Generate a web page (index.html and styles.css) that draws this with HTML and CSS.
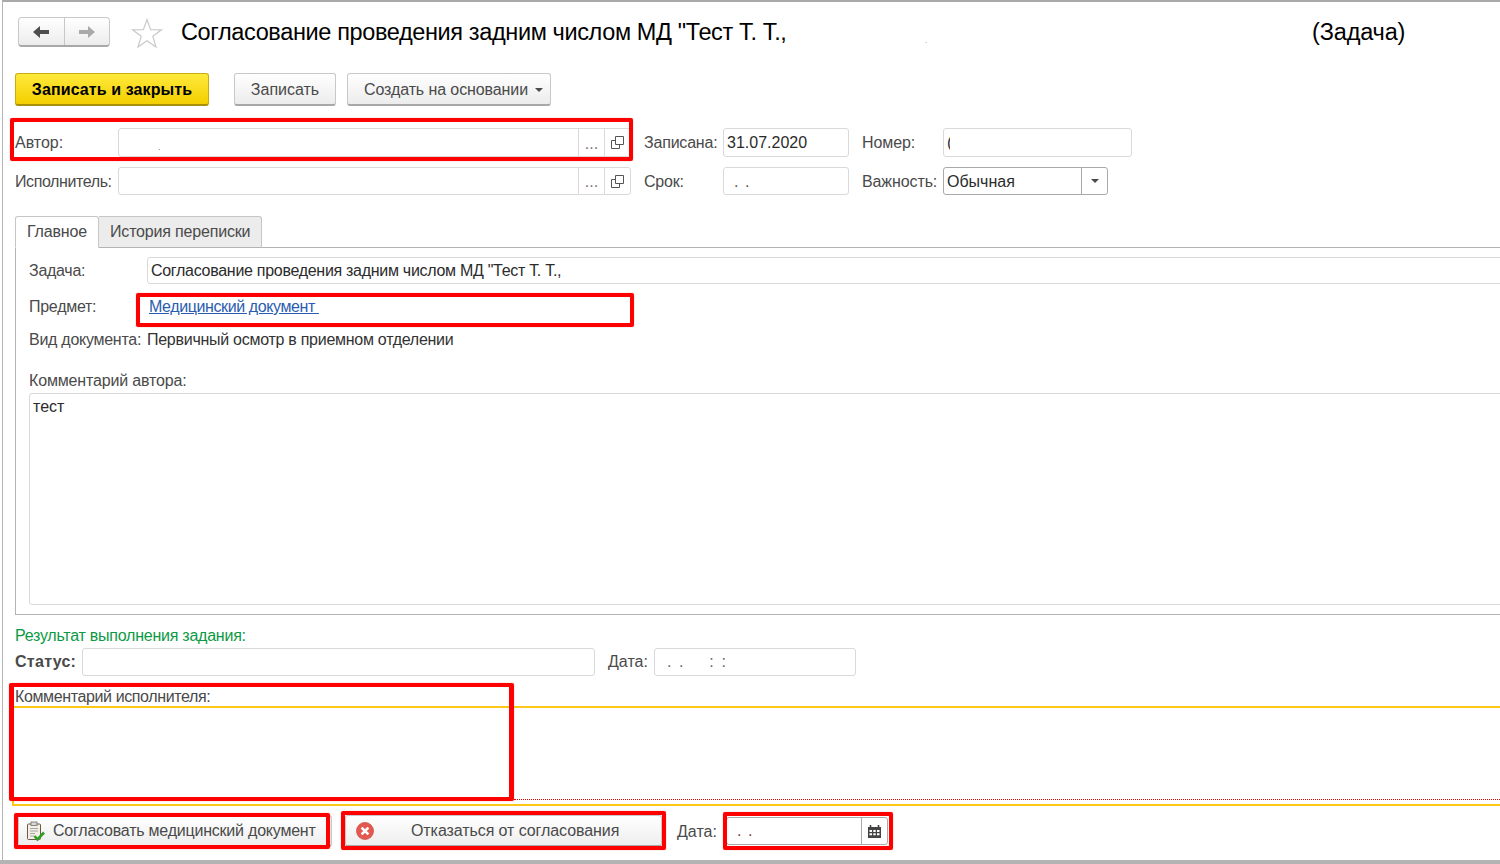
FILE: index.html
```html
<!DOCTYPE html>
<html lang="en">
<head>
    <meta charset="UTF-8">
    <title>Согласование проведения задним числом МД (Задача)</title>
    <link rel="stylesheet" href="styles.css">
</head>
<body>
<div class="page">
    <!-- Title bar -->
    <div class="title-row">
        <div class="nav-buttons">
            <button class="nav-btn">
                <svg width="18" height="14" viewBox="0 0 18 14"><path d="M8 1 L1 7 L8 13 V9 H17 V5 H8 Z" fill="#4d4d4d"/></svg>
            </button>
            <button class="nav-btn">
                <svg width="18" height="14" viewBox="0 0 18 14"><path d="M10 1 L17 7 L10 13 V9 H1 V5 H10 Z" fill="#a9a9a9"/></svg>
            </button>
        </div>
        <svg class="star" width="32" height="30" viewBox="0 0 32 30"><path d="M16 1.5 L19.6 11.6 L30.5 11.8 L21.8 18.3 L25 29 L16 22.7 L7 29 L10.2 18.3 L1.5 11.8 L12.4 11.6 Z" fill="#fff" stroke="#c9c9c9" stroke-width="1.2"/></svg>
        <div class="title">Согласование проведения задним числом МД "Тест Т. Т.,</div>
        <div class="title-dot">.</div>
        <div class="title-kind">(Задача)</div>
    </div>

    <!-- Command bar -->
    <div class="command-row">
        <button class="btn btn-primary">Записать и закрыть</button>
        <button class="btn btn-save">Записать</button>
        <button class="btn btn-create">Создать на основании<span class="caret"></span></button>
    </div>

    <!-- Header fields -->
    <div class="field-row row-author">
        <span class="label label-left label-author">Автор:</span>
        <div class="input input-ref">
            <span class="input-text author-dot">.</span>
            <span class="input-btn dots">...</span>
            <span class="input-btn">
                <svg class="copy-icon" width="13" height="13" viewBox="0 0 13 13"><path d="M4.5 .5 H12.5 V8.5 H4.5 Z M4.5 4.5 H.5 V12.5 H8.5 V8.5" fill="none" stroke="#555"/></svg>
            </span>
        </div>
        <span class="label label-mid">Записана:</span>
        <div class="input input-date"><span class="input-text dark">31.07.2020</span></div>
        <span class="label label-right">Номер:</span>
        <div class="input input-number"><span class="input-text dark number-clip">(</span></div>
    </div>
    <div class="field-row row-performer">
        <span class="label label-left">Исполнитель:</span>
        <div class="input input-ref">
            <span class="input-text"></span>
            <span class="input-btn dots">...</span>
            <span class="input-btn">
                <svg class="copy-icon" width="13" height="13" viewBox="0 0 13 13"><path d="M4.5 .5 H12.5 V8.5 H4.5 Z M4.5 4.5 H.5 V12.5 H8.5 V8.5" fill="none" stroke="#555"/></svg>
            </span>
        </div>
        <span class="label label-mid">Срок:</span>
        <div class="input input-date"><span class="input-text date-mask">. .</span></div>
        <span class="label label-right">Важность:</span>
        <div class="input input-select">
            <span class="input-text dark">Обычная</span>
            <span class="input-btn"><span class="caret"></span></span>
        </div>
    </div>

    <!-- Tabs -->
    <div class="tabs">
        <div class="tab tab-active">Главное</div>
        <div class="tab">История переписки</div>
    </div>
    <div class="tab-panel">
        <div class="panel-row row-task">
            <span class="label panel-label">Задача:</span>
            <div class="input input-task"><span class="input-text dark">Согласование проведения задним числом МД "Тест Т. Т.,</span></div>
        </div>
        <div class="panel-row row-subject">
            <span class="label panel-label">Предмет:</span>
            <a class="doc-link" href="#">Медицинский документ </a>
        </div>
        <div class="panel-row row-kind">
            <span class="label panel-label">Вид документа:</span>
            <span class="plain-value">Первичный осмотр в приемном отделении</span>
        </div>
        <div class="label author-comment-label">Комментарий автора:</div>
        <div class="comment-box">тест</div>
    </div>

    <!-- Result -->
    <div class="result-title">Результат выполнения задания:</div>
    <div class="field-row row-status">
        <span class="label label-status">Статус:</span>
        <div class="input input-status"></div>
        <span class="label label-status-date">Дата:</span>
        <div class="input input-status-date"><span class="input-text date-mask-gray">. .&nbsp;&nbsp;&nbsp;&nbsp;: :</span></div>
    </div>
    <div class="label performer-comment-label">Комментарий исполнителя:</div>
    <div class="performer-comment"><div class="dotted-line"></div></div>

    <!-- Bottom actions -->
    <div class="action-row">
        <button class="btn btn-action btn-approve">
            <svg width="20" height="20" viewBox="0 0 20 20">
                <rect x="2.5" y="3" width="13" height="15.5" rx="1" fill="#f4efe4" stroke="#6b5a45"/>
                <rect x="6" y="1" width="6" height="3.5" fill="#d8d8d8" stroke="#6b6b6b" stroke-width=".8"/>
                <path d="M5 7.5 H13 M5 10 H13 M5 12.5 H10 M5 15 H9" stroke="#a7a7a7"/>
                <path d="M9.5 15 L12.5 18.5 L19 11.5" fill="none" stroke="#2f9e22" stroke-width="2.6"/>
            </svg>
            <span>Согласовать медицинский документ</span>
        </button>
        <button class="btn btn-action btn-refuse">
            <svg width="18" height="18" viewBox="0 0 18 18">
                <circle cx="9" cy="9" r="8.5" fill="#e5574f" stroke="#c9544c" stroke-width=".8"/>
                <path d="M5.6 5.6 L12.4 12.4 M12.4 5.6 L5.6 12.4" stroke="#fff" stroke-width="2.6"/>
            </svg>
            <span>Отказаться от согласования</span>
        </button>
        <span class="label label-action-date">Дата:</span>
        <div class="input input-action-date">
            <span class="input-text date-mask action-mask">. .</span>
            <span class="input-btn">
                <svg width="13" height="13" viewBox="0 0 13 13">
                    <path d="M0 2 H13 V13 H0 Z" fill="#444"/>
                    <path d="M2.5 0 V3 M10.5 0 V3" stroke="#444" stroke-width="1.6"/>
                    <path d="M1.5 5 H4 V7 H1.5 Z M5.3 5 H7.7 V7 H5.3 Z M9 5 H11.5 V7 H9 Z M1.5 8.2 H4 V10.2 H1.5 Z M5.3 8.2 H7.7 V10.2 H5.3 Z M9 8.2 H11.5 V10.2 H9 Z" fill="#fff"/>
                </svg>
            </span>
        </div>
    </div>

    <!-- Red annotation frames drawn over the screenshot -->
    <div class="mark mark-author"></div>
    <div class="mark mark-subject"></div>
    <div class="mark mark-comment"></div>
    <div class="mark mark-approve"></div>
    <div class="mark mark-refuse"></div>
    <div class="mark mark-date"></div>
</div>
<div class="bottom-bar"></div>
</body>
</html>
```

FILE: styles.css
```css
* {
    box-sizing: border-box;
}
html, body {
    margin: 0;
    height: 864px;
    overflow: hidden;
    background: #fff;
}
body {
    font-family: "Liberation Sans", Arial, sans-serif;
    font-size: 16px;
    letter-spacing: -0.27px;
    color: #4a4a4a;
    position: relative;
}
button {
    font-family: inherit;
}
.page {
    width: 1530px;
    height: 860px;
    border-top: 2px solid #a9a9a9;
    border-left: 1px solid #b5b5b5;
    margin-left: 2px;
    padding-left: 12px;
}
.bottom-bar {
    height: 4px;
    background: #b3b3b3;
}

/* Title bar */
.title-row {
    display: flex;
    align-items: center;
    height: 30px;
    margin-top: 15px;
    padding-left: 3px;
}
.nav-buttons {
    display: flex;
    width: 92px;
    height: 30px;
    border: 1px solid #c8c8c8;
    border-bottom: 2px solid #a8a8a8;
    border-radius: 4px;
    background: linear-gradient(#fff, #ececec);
}
.nav-btn {
    flex: 1;
    border: 0;
    background: none;
    padding: 0;
    display: flex;
    align-items: center;
    justify-content: center;
}
.nav-btn + .nav-btn {
    border-left: 1px solid #c8c8c8;
}
.star {
    margin-left: 21px;
    margin-top: 2px;
}
.title {
    margin-left: 18px;
    width: 744px;
    font-size: 23.5px;
    letter-spacing: -0.37px;
    color: #000;
    white-space: nowrap;
}
.title-dot {
    font-size: 8px;
    color: #888;
    width: 387px;
    padding-top: 16px;
}
.title-kind {
    font-size: 23.5px;
    letter-spacing: -0.15px;
    color: #000;
}

/* Command bar */
.command-row {
    display: flex;
    height: 33px;
    margin-top: 26px;
}
.btn {
    height: 33px;
    border: 1px solid #c8c8c8;
    border-bottom: 2px solid #a8a8a8;
    border-radius: 3px;
    background: linear-gradient(#fff, #ececec);
    color: #4a4a4a;
    font-size: 16px;
    letter-spacing: 0;
    padding: 2px 0 0;
}
.btn-primary {
    width: 194px;
    font-weight: bold;
    letter-spacing: 0.1px;
    color: #000;
    background: linear-gradient(#ffe93b, #f3cf00);
    border-color: #c9ad12;
    border-bottom-color: #a8900a;
}
.btn-save {
    width: 102px;
    margin-left: 25px;
}
.btn-create {
    width: 204px;
    margin-left: 11px;
    display: flex;
    align-items: center;
    padding-left: 16px;
    letter-spacing: -0.1px;
}
.caret {
    display: inline-block;
    width: 0;
    height: 0;
    border-left: 4px solid transparent;
    border-right: 4px solid transparent;
    border-top: 4px solid #4a4a4a;
}
.btn-create .caret {
    margin-left: 7px;
}

/* Fields */
.field-row {
    display: flex;
    align-items: center;
    height: 28px;
}
.row-author {
    margin-top: 22px;
    height: 29px;
}
.row-performer {
    margin-top: 10px;
}
.row-performer .label,
.row-performer .input-text {
    padding-top: 2px;
}
.label {
    white-space: nowrap;
}
.label-left {
    width: 103px;
    flex-shrink: 0;
    letter-spacing: -0.4px;
}
.label-author {
    letter-spacing: 0;
}
.label-mid {
    width: 79px;
    margin-left: 13px;
    letter-spacing: -0.2px;
}
.label-right {
    width: 81px;
    margin-left: 13px;
    letter-spacing: -0.1px;
}
.input {
    display: flex;
    align-items: center;
    height: 100%;
    background: #fff;
    border: 1px solid #d9d9d9;
    border-radius: 3px;
    color: #333;
    letter-spacing: 0;
}
.input-text {
    flex: 1;
    padding-left: 3px;
    white-space: nowrap;
    overflow: hidden;
}
.dark {
    color: #2b2b2b;
}
.number-clip {
    flex: none;
    width: 6px;
}
.author-dot {
    font-size: 9px;
    color: #777;
    padding-left: 39px;
    padding-top: 8px;
}
.date-mask {
    padding-left: 10px;
    color: #555;
    letter-spacing: 1px;
}
.date-mask-gray {
    padding-left: 12px;
    color: #666;
    letter-spacing: 1.6px;
}
.action-mask {
    color: #7a3a3a;
}
.input-btn {
    height: 100%;
    width: 26px;
    display: flex;
    align-items: center;
    justify-content: center;
    border-left: 1px solid #d9d9d9;
}
.copy-icon {
    margin-right: 1px;
}
.dots {
    color: #777;
    padding-top: 2px;
}
.input-ref {
    width: 513px;
}
.input-date {
    width: 126px;
}
.input-number {
    width: 189px;
}
.input-select {
    width: 165px;
    border-color: #a9a9a9;
}
.input-select .input-btn {
    border-left-color: #a9a9a9;
}

/* Tabs */
.tabs {
    display: flex;
    height: 32px;
    margin-top: 21px;
    position: relative;
    z-index: 1;
}
.tab {
    height: 32px;
    padding: 6px 11px 0;
    letter-spacing: -0.18px;
    background: #ececec;
    border: 1px solid #c6c6c6;
    border-bottom: 1px solid #b3b3b3;
    border-left: 0;
    border-radius: 0 3px 0 0;
}
.tab-active {
    width: 84px;
    background: #fff;
    border-left: 1px solid #c6c6c6;
    border-bottom-color: #fff;
    border-radius: 3px 3px 0 0;
}
.tab-panel {
    height: 368px;
    margin-top: -1px;
    border: 1px solid #b3b3b3;
    padding: 9px 0 0 13px;
}
.panel-row {
    display: flex;
    align-items: center;
}
.panel-label {
    width: 118px;
    flex-shrink: 0;
}
.row-task {
    height: 27px;
}
.input-task {
    flex: 1;
    letter-spacing: -0.29px;
}
.row-subject {
    height: 26px;
    margin-top: 10px;
}
.doc-link {
    margin-left: 2px;
    color: #2a5db0;
    white-space: pre;
    letter-spacing: -0.4px;
}
.row-kind {
    height: 20px;
    margin-top: 10px;
}
.plain-value {
    color: #333;
}
.author-comment-label {
    margin-top: 21px;
    line-height: 20px;
    letter-spacing: -0.16px;
}
.comment-box {
    height: 212px;
    margin-top: 2px;
    border: 1px solid #d9d9d9;
    border-radius: 3px;
    padding: 4px 3px;
    color: #2b2b2b;
    letter-spacing: 0;
}

/* Result block */
.result-title {
    margin-top: 11px;
    line-height: 20px;
    letter-spacing: -0.24px;
    color: #0b9a44;
}
.row-status {
    margin-top: 2px;
}
.label-status {
    width: 67px;
    font-weight: bold;
    letter-spacing: 0.28px;
}
.input-status {
    width: 513px;
}
.label-status-date {
    width: 46px;
    margin-left: 13px;
    letter-spacing: 0;
}
.input-status-date {
    width: 202px;
}
.performer-comment-label {
    margin-top: 10px;
    height: 20px;
    padding-top: 1px;
    line-height: 20px;
    letter-spacing: -0.38px;
}
.performer-comment {
    height: 100px;
    margin-left: -3px;
    border: 2px solid #fdc819;
    border-right: 0;
    position: relative;
}
.dotted-line {
    position: absolute;
    left: 500px;
    right: 0;
    bottom: 4px;
    border-top: 1px dotted #e00000;
}

/* Bottom actions */
.action-row {
    display: flex;
    align-items: center;
    height: 32px;
    margin-top: 9px;
    padding-left: 3px;
}
.btn-action {
    height: 32px;
    display: flex;
    align-items: center;
    padding-top: 0;
    background: linear-gradient(#fff, #eeeeee);
}
.btn-approve {
    width: 314px;
    padding-left: 6px;
    letter-spacing: -0.22px;
}
.btn-approve span {
    margin-left: 8px;
}
.btn-refuse {
    width: 317px;
    margin-left: 13px;
    padding-left: 10px;
    letter-spacing: -0.08px;
}
.btn-refuse span {
    margin-left: 37px;
}
.label-action-date {
    width: 49px;
    margin-left: 15px;
    padding-top: 2px;
    letter-spacing: 0;
}
.input-action-date {
    width: 162px;
    height: 28px;
    border-color: #a9a9a9;
}
.input-action-date .input-btn {
    border-left-color: #a9a9a9;
}

/* Red annotation frames */
.mark {
    position: absolute;
    border: 4px solid #ff0000;
    border-radius: 2px;
    box-shadow: 0 0 1px #ff5050;
}
.mark-author {
    left: 10px;
    top: 118px;
    width: 623px;
    height: 43px;
}
.mark-subject {
    left: 136px;
    top: 293px;
    width: 498px;
    height: 34px;
}
.mark-comment {
    left: 9px;
    top: 683px;
    width: 505px;
    height: 118px;
    border-width: 4px 5px;
}
.mark-approve {
    left: 14px;
    top: 813px;
    width: 316px;
    height: 36px;
}
.mark-refuse {
    left: 341px;
    top: 811px;
    width: 325px;
    height: 39px;
}
.mark-date {
    left: 723px;
    top: 812px;
    width: 170px;
    height: 38px;
}
```
